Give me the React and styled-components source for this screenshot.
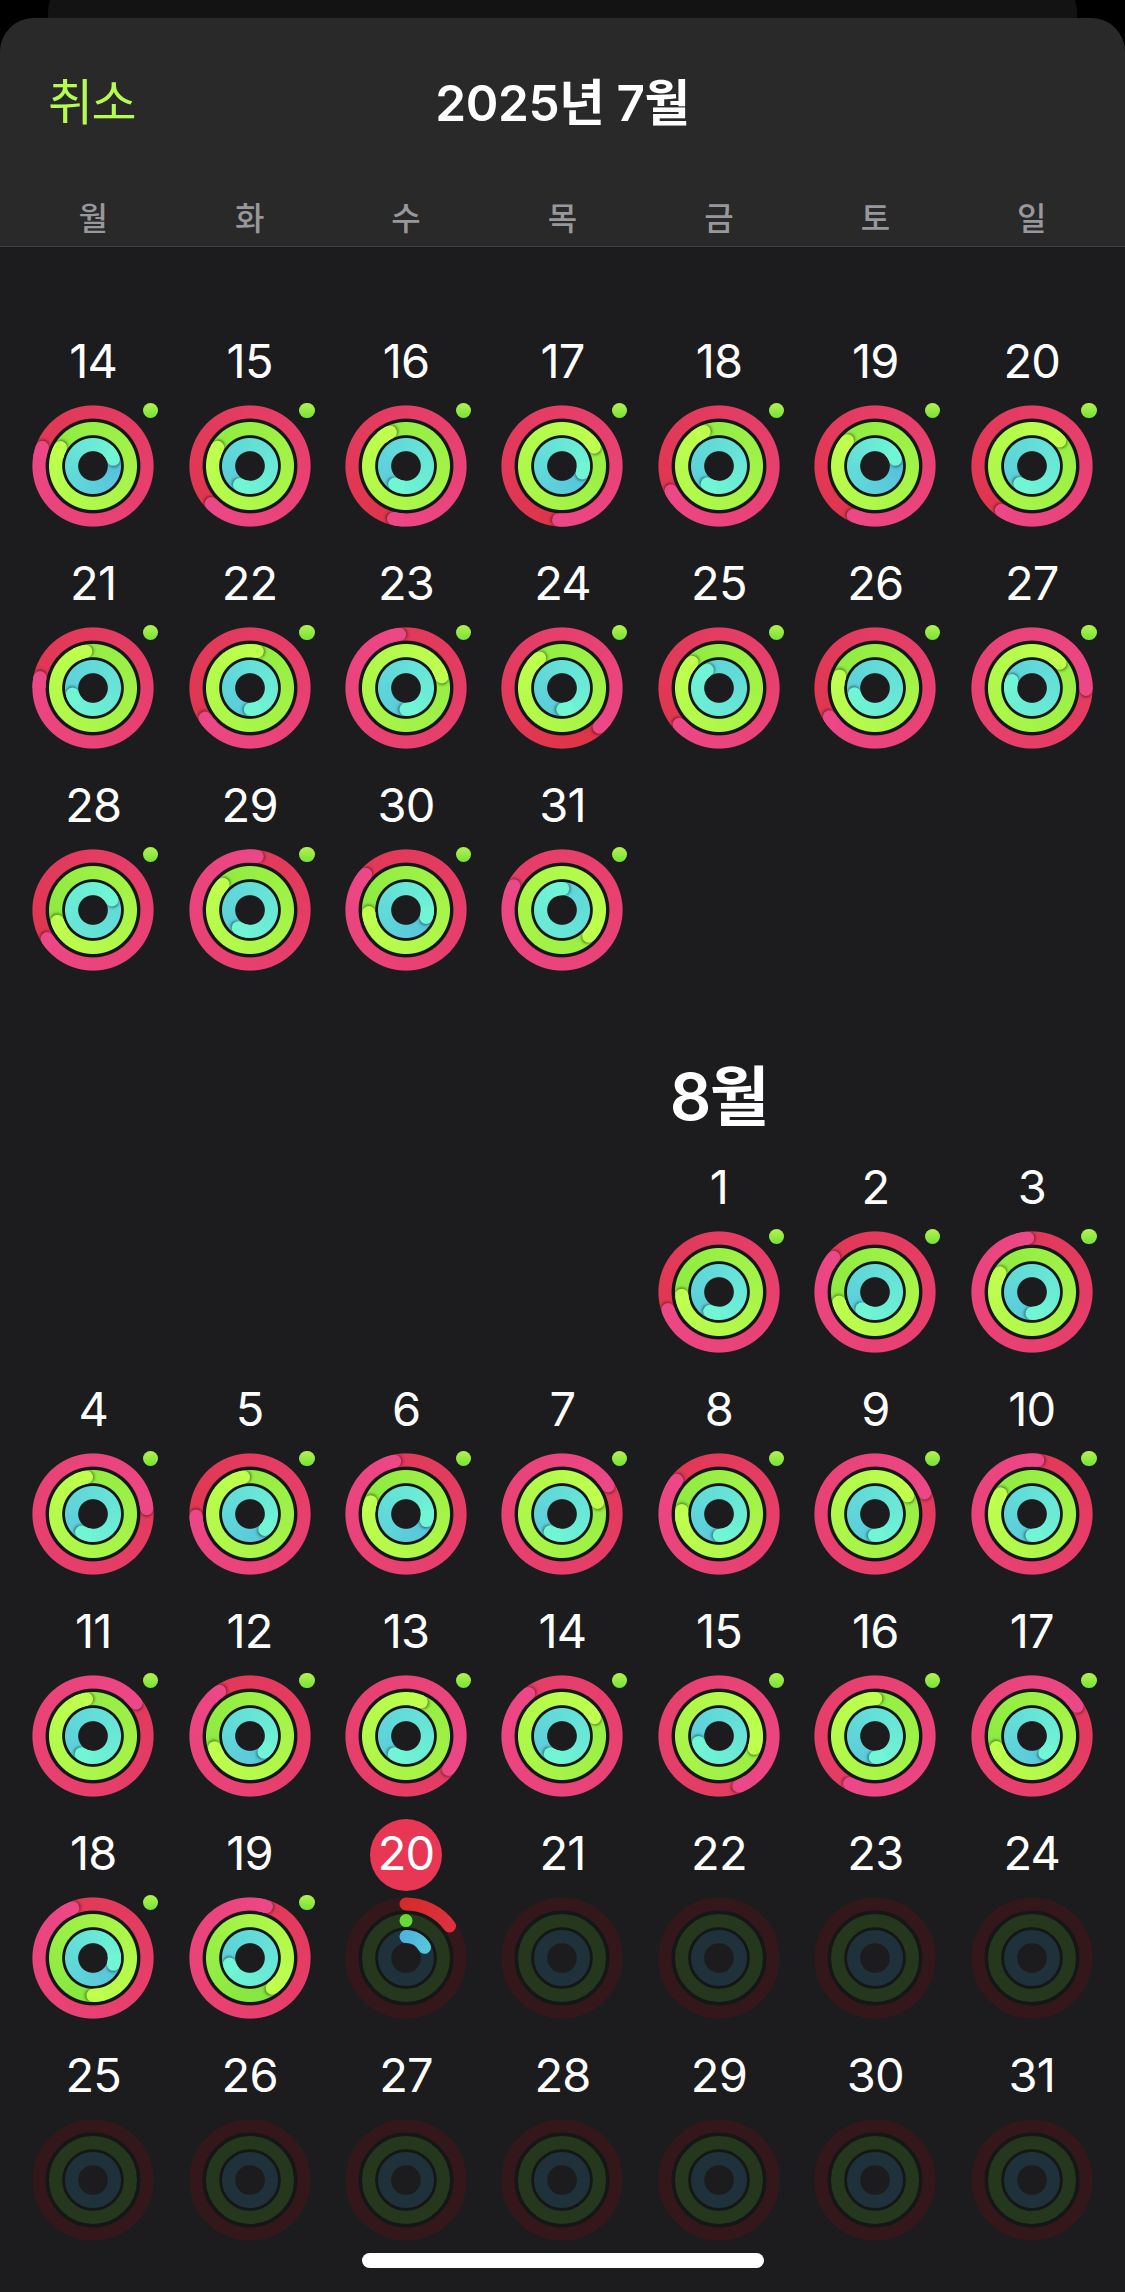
import React from "react";
import styled, { createGlobalStyle, css } from "styled-components";

const DAY_NAMES = ["월", "화", "수", "목", "금", "토", "일"];

// ring geometry, in px
const SIZE = 122;
const CENTER = SIZE / 2;
const STROKE = 13.2;

const RINGS = [
  { key: "move", radius: 54, from: [215, 43, 42], to: [236, 71, 134], track: "#34171b" },
  { key: "exercise", radius: 37.4, from: [104, 218, 56], to: [191, 255, 78], track: "#25371d" },
  { key: "stand", radius: 21.4, from: [78, 180, 222], to: [112, 246, 212], track: "#1f323b" },
];

// every day: [day, move, exercise, stand], each one in laps of the ring
const JULY = [
  [
    [14, 1.806, 1.832, 1.199],
    [15, 1.627, 1.833, 1.581],
    [16, 1.537, 1.931, 1.588],
    [17, 1.51, 2.166, 1.302],
    [18, 1.674, 1.935, 1.592],
    [19, 1.566, 1.868, 1.199],
    [20, 1.596, 2.133, 1.596],
  ],
  [
    [21, 1.781, 1.969, 1.704],
    [22, 1.656, 2.031, 1.497],
    [23, 1.981, 2.202, 1.5],
    [24, 1.379, 1.898, 1.494],
    [25, 1.632, 1.871, 1.907],
    [26, 1.66, 1.802, 1.706],
    [27, 2.254, 2.134, 1.806],
  ],
  [
    [28, 1.661, 1.701, 2.172],
    [29, 2.021, 1.871, 1.593],
    [30, 1.865, 1.739, 1.306],
    [31, 2.824, 2.373, 2.006],
    null,
    null,
    null,
  ],
];

const AUGUST = [
  [
    null,
    null,
    null,
    null,
    [1, 1.697, 1.736, 1.571],
    [2, 1.861, 1.706, 1.605],
    [3, 1.987, 1.835, 1.5],
  ],
  [
    [4, 2.234, 1.972, 1.589],
    [5, 1.744, 1.972, 1.378],
    [6, 1.966, 1.803, 1.299],
    [7, 2.163, 2.2, 1.593],
    [8, 1.857, 1.765, 1.497],
    [9, 2.186, 2.169, 1.503],
    [10, 2.017, 1.841, 1.5],
  ],
  [
    [11, 2.146, 1.972, 1.592],
    [12, 1.905, 1.699, 1.386],
    [13, 2.356, 2.067, 1.592],
    [14, 2.894, 2.168, 1.592],
    [15, 2.44, 2.303, 1.701],
    [16, 2.578, 2.003, 1.497],
    [17, 2.157, 1.7, 1.397],
  ],
  [
    [18, 1.939, 1.5, 1.297],
    [19, 2.049, 1.399, 1.704],
    [20, 0.149, 0.0001, 0.167],
    [21],
    [22],
    [23],
    [24],
  ],
  [[25], [26], [27], [28], [29], [30], [31]],
];

const TODAY = 20;

const mix = (from, to, t) =>
  `rgb(${from.map((c, i) => Math.round(c + (to[i] - c) * t)).join(",")})`;

const point = (radius, deg) => {
  const a = (deg * Math.PI) / 180;
  return [CENTER + radius * Math.sin(a), CENTER - radius * Math.cos(a)];
};

const arc = (radius, start, end) => {
  const [x1, y1] = point(radius, start);
  const [x2, y2] = point(radius, end);
  return `M${x1} ${y1}A${radius} ${radius} 0 ${end - start > 180 ? 1 : 0} 1 ${x2} ${y2}`;
};

// a ring that went round at least once, its end lies over its own start
const FullRing = ({ ring, value, id }) => {
  const angle = (value % 1) * 360;
  const start = mix(ring.from, ring.to, (value - 1) / value);
  const end = mix(ring.from, ring.to, 1);
  const [cx, cy] = point(ring.radius, angle);
  const [sx, sy] = point(ring.radius, angle + 100 / ring.radius);
  const inner = ring.radius - STROKE / 2;
  const outer = ring.radius + STROKE / 2;

  return (
    <>
      <Sweep
        $inner={inner}
        $outer={outer}
        style={{
          backgroundImage: `conic-gradient(from ${angle}deg, ${start}, ${end})`,
        }}
      />
      <Drawing viewBox={`0 0 ${SIZE} ${SIZE}`}>
        <defs>
          <clipPath id={id}>
            <path
              clipRule="evenodd"
              d={`M${CENTER - outer} ${CENTER}a${outer} ${outer} 0 1 1 ${outer * 2} 0a${outer} ${outer} 0 1 1 ${-outer * 2} 0zM${CENTER - inner} ${CENTER}a${inner} ${inner} 0 1 1 ${inner * 2} 0a${inner} ${inner} 0 1 1 ${-inner * 2} 0z`}
            />
          </clipPath>
        </defs>
        <g clipPath={`url(#${id})`}>
          <CapShadow cx={sx} cy={sy} r={STROKE / 2 - 0.5} />
          <path
            d={arc(ring.radius, angle - 600 / ring.radius, angle)}
            stroke={end}
            strokeWidth={STROKE + 1}
            fill="none"
          />
          <circle cx={cx} cy={cy} r={STROKE / 2} fill={end} />
        </g>
      </Drawing>
    </>
  );
};

const PartialRing = ({ ring, value, id }) => {
  const angle = value * 360;
  const [x, y] = point(ring.radius, angle);
  return (
    <Drawing viewBox={`0 0 ${SIZE} ${SIZE}`}>
      <defs>
        <linearGradient
          id={id}
          gradientUnits="userSpaceOnUse"
          x1={CENTER}
          y1={CENTER - ring.radius}
          x2={x + 1}
          y2={y}
        >
          <stop offset="0" stopColor={mix(ring.from, ring.to, 0)} />
          <stop offset="1" stopColor={mix(ring.from, ring.to, value * 1.5)} />
        </linearGradient>
      </defs>
      <circle
        cx={CENTER}
        cy={CENTER}
        r={ring.radius}
        stroke={ring.track}
        strokeWidth={STROKE}
        fill="none"
      />
      {value > 0 && (
        <path
          d={arc(ring.radius, 0, angle)}
          stroke={`url(#${id})`}
          strokeWidth={STROKE - 0.2}
          strokeLinecap="round"
          fill="none"
        />
      )}
    </Drawing>
  );
};

const ActivityRings = ({ values, name }) => (
  <RingStack>
    <Backdrop />
    {RINGS.map((ring, i) => {
      const value = values[i] || 0;
      const Ring = value >= 1 ? FullRing : PartialRing;
      return <Ring key={ring.key} ring={ring} value={value} id={`${name}-${ring.key}`} />;
    })}
    {values[0] >= 1 && <WorkoutDot />}
  </RingStack>
);

const Week = ({ days, month }) => (
  <WeekRow>
    {days.map((item, i) => {
      if (!item) return <DayCell key={i} />;
      const [day, ...values] = item;
      return (
        <DayCell key={i}>
          <DayNumber $today={month === "aug" && day === TODAY}>
            <span>{day}</span>
          </DayNumber>
          <ActivityRings values={values} name={`${month}${day}`} />
        </DayCell>
      );
    })}
  </WeekRow>
);

const App = () => {
  return (
    <Screen>
      <GlobalStyle />
      <Behind>
        <BehindCard />
      </Behind>
      <Sheet>
        <Header>
          <TitleBar>
            <CancelButton>취소</CancelButton>
            <Title>2025년 7월</Title>
          </TitleBar>
          <DayNames>
            {DAY_NAMES.map((name) => (
              <span key={name}>{name}</span>
            ))}
          </DayNames>
        </Header>
        <Calendar>
          {JULY.map((days, i) => (
            <Week key={i} days={days} month="jul" />
          ))}
          <MonthRow>
            <MonthName>8월</MonthName>
          </MonthRow>
          {AUGUST.map((days, i) => (
            <Week key={i} days={days} month="aug" />
          ))}
        </Calendar>
      </Sheet>
      <HomeIndicator />
    </Screen>
  );
};

export default App;

const GlobalStyle = createGlobalStyle`
  body {
    margin: 0;
    background: #000;
    font-family: Inter, "Noto Sans CJK KR", sans-serif;
    color: #fff;
  }
`;

const Screen = styled.div`
  position: relative;
  width: 1125px;
  height: 2292px;
  overflow: hidden;
  display: flex;
  flex-direction: column;
`;

const Behind = styled.div`
  height: 18px;
  display: flex;
  justify-content: center;
  align-items: flex-end;
  overflow: hidden;
`;

const BehindCard = styled.div`
  flex: none;
  width: 1029px;
  height: 42px;
  border-radius: 36px 36px 0 0;
  background: #131313;
`;

const Sheet = styled.main`
  flex: 1;
  border-radius: 34px 34px 0 0;
  background: #1c1c1e;
  overflow: hidden;
`;

const Header = styled.header`
  box-sizing: border-box;
  height: 229px;
  display: flex;
  flex-direction: column;
  background: #29292a;
  border-bottom: 1px solid #3e3e40;
`;

const TitleBar = styled.div`
  display: grid;
  grid-template-columns: 1fr auto 1fr;
  align-items: center;
  height: 168px;
  padding: 0 48px;
`;

const CancelButton = styled.button`
  justify-self: start;
  margin: 0 0 6px;
  padding: 0;
  border: 0;
  background: none;
  color: #b5fc4f;
  font: 400 49px/60px "Noto Sans CJK KR", sans-serif;
  letter-spacing: -1.5px;
`;

const Title = styled.h1`
  margin: 1px 0 0;
  font-size: 49.5px;
  font-weight: 600;
  line-height: 60px;
  letter-spacing: -0.4px;
  white-space: nowrap;
`;

const DayNames = styled.div`
  display: grid;
  grid-template-columns: repeat(7, 1fr);
  padding: 11px 15px 0;
  text-align: center;
  color: #98989c;
  font-size: 32px;
  font-weight: 500;
  line-height: 44px;
`;

const Calendar = styled.section`
  padding: 72px 15px 0;
`;

const WeekRow = styled.div`
  display: grid;
  grid-template-columns: repeat(7, 1fr);
  height: 222px;
`;

const DayCell = styled.div`
  display: flex;
  flex-direction: column;
  align-items: center;
`;

const DayNumber = styled.div`
  display: flex;
  align-items: center;
  justify-content: center;
  width: 72px;
  height: 72px;
  margin: 8px 0 6px;
  border-radius: 50%;
  font-size: 47px;
  line-height: 68px;
  letter-spacing: -0.8px;

  span {
    margin-top: -4px;
  }

  ${(props) =>
    props.$today &&
    css`
      background: #e73755;
    `}
`;

const RingStack = styled.div`
  display: grid;
  width: ${SIZE}px;
  height: ${SIZE}px;

  > * {
    grid-area: 1 / 1;
  }
`;

const Backdrop = styled.div`
  place-self: center;
  box-sizing: border-box;
  width: 98px;
  height: 98px;
  border: 34px solid #141715;
  border-radius: 50%;
`;

const Sweep = styled.div`
  mask-image: radial-gradient(
    circle at center,
    transparent ${(props) => props.$inner - 0.5}px,
    #000 ${(props) => props.$inner + 0.5}px,
    #000 ${(props) => props.$outer - 0.5}px,
    transparent ${(props) => props.$outer + 0.5}px
  );
`;

const Drawing = styled.svg`
  display: block;
  isolation: isolate;
  z-index: 0;
  width: ${SIZE}px;
  height: ${SIZE}px;
  overflow: visible;
`;

const CapShadow = styled.circle`
  fill: rgba(0, 0, 0, 0.5);
  filter: blur(1.6px);
`;

const WorkoutDot = styled.i`
  place-self: start end;
  position: relative;
  top: -2px;
  left: 4px;
  width: 15.4px;
  height: 15.4px;
  border-radius: 50%;
  background: linear-gradient(#b4f150, #76e338);
`;

const MonthRow = styled.div`
  display: grid;
  grid-template-columns: repeat(7, 1fr);
  height: 160px;
`;

const MonthName = styled.h2`
  grid-column: 5;
  margin: 67px 0 0;
  text-align: center;
  white-space: nowrap;
  font-size: 65px;
  font-weight: 600;
  line-height: 90px;
  letter-spacing: -1.6px;
`;

const HomeIndicator = styled.div`
  position: absolute;
  left: 50%;
  bottom: 24px;
  width: 402px;
  height: 15px;
  transform: translateX(-50%);
  border-radius: 8px;
  background: #fff;
`;
